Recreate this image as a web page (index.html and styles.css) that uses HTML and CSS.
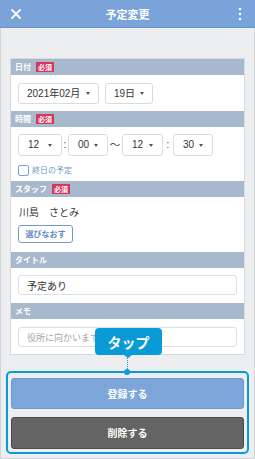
FILE: index.html
```html
<!DOCTYPE html>
<html lang="ja">
<head>
<meta charset="utf-8">
<title>予定変更</title>
<link rel="stylesheet" href="styles.css">
</head>
<body>
<div class="screen">
  <header class="appbar">
    <svg class="icon-close" width="10" height="10" viewBox="0 0 10 10"><path d="M1 1 L9 9 M9 1 L1 9" stroke="#fff" stroke-width="1.8" stroke-linecap="square"/></svg>
    <h1 class="appbar-title">予定変更</h1>
    <svg class="icon-more" width="4" height="14" viewBox="0 0 4 14"><circle cx="2" cy="2" r="1.3" fill="#fff"/><circle cx="2" cy="7" r="1.3" fill="#fff"/><circle cx="2" cy="12" r="1.3" fill="#fff"/></svg>
  </header>
  <main class="content">
    <section class="panel">
      <div class="sec-head">日付<span class="req">必須</span></div>
      <div class="sec-body date-body">
        <div class="select w81"><span>2021年02月</span><i class="caret"></i></div>
        <div class="select w48"><span>19日</span><i class="caret"></i></div>
      </div>

      <div class="sec-head">時間<span class="req">必須</span></div>
      <div class="sec-body time-body">
        <div class="time-row">
          <div class="select t44"><span>12</span><i class="caret"></i></div>
          <span class="sep s6">:</span>
          <div class="select t40"><span>00</span><i class="caret"></i></div>
          <span class="sep s14">〜</span>
          <div class="select t41"><span>12</span><i class="caret"></i></div>
          <span class="sep s10">:</span>
          <div class="select t40"><span>30</span><i class="caret"></i></div>
        </div>
        <label class="check"><span class="box"></span><span class="check-text">終日の予定</span></label>
      </div>

      <div class="sec-head">スタッフ<span class="req">必須</span></div>
      <div class="sec-body staff-body">
        <div class="staff-name">川島　さとみ</div>
        <button class="btn-outline">選びなおす</button>
      </div>

      <div class="sec-head">タイトル</div>
      <div class="sec-body input-body">
        <div class="input">予定あり</div>
      </div>

      <div class="sec-head">メモ</div>
      <div class="sec-body input-body memo-body">
        <div class="input placeholder">役所に向かいます</div>
      </div>
    </section>

    <div class="actions">
      <button class="btn btn-primary">登録する</button>
      <button class="btn btn-dark">削除する</button>
    </div>

    <div class="tap-frame"></div>
    <div class="tap-line"></div>
    <div class="tap-dot"></div>
    <div class="tooltip">タップ</div>
  </main>
</div>
</body>
</html>
```

FILE: styles.css
```css
* { box-sizing: border-box; margin: 0; padding: 0; }
html, body { width: 255px; height: 459px; overflow: hidden; }
body {
  font-family: "Liberation Sans", "Noto Sans CJK JP", sans-serif;
  background: #eceef0;
  color: #333;
}
.screen {
  width: 255px;
  height: 459px;
  border: 1px solid #d2d4d8;
  border-top: none;
  background: #eceef0;
  position: relative;
}
.appbar {
  height: 28px;
  margin: 0 -1px;
  background: #7aa4d9;
  border-bottom: 1px solid #6890c6;
  display: flex;
  align-items: center;
  justify-content: space-between;
  padding: 0 13px 0 11px;
  position: relative;
}
.icon-close { display: block; margin-top: 1px; }
.icon-more { display: block; margin-top: 1px; }
.appbar-title {
  position: absolute;
  left: 0; right: 0;
  text-align: center;
  font-size: 11px;
  font-weight: bold;
  color: #fff;
  line-height: 28px;
  font-family: "Noto Sans CJK JP", sans-serif;
  pointer-events: none;
}
.content {
  padding: 30px 9px 0 9px;
  position: relative;
}
.panel {
  background: #fff;
  border: 1px solid #d6d9de;
}
.sec-head {
  height: 16px;
  background: #a9b9cd;
  color: #fff;
  font-size: 8px;
  font-weight: bold;
  font-family: "Noto Sans CJK JP", sans-serif;
  display: flex;
  align-items: center;
  padding-left: 4px;
  line-height: 1;
}
.req {
  display: inline-block;
  background: #d8345c;
  color: #fff;
  font-size: 7px;
  height: 10px;
  line-height: 10px;
  padding: 0 2px;
  margin-left: 5px;
  white-space: nowrap;
}
.sec-body { padding: 0 7px; }
.date-body {
  display: flex;
  gap: 6px;
  padding-top: 8px;
  padding-bottom: 7px;
}
.select {
  height: 21px;
  border: 1px solid #d9dcdf;
  border-radius: 3px;
  background: #fff;
  display: flex;
  align-items: center;
  justify-content: space-between;
  padding: 0 8px 0 8px;
  font-size: 10px;
  color: #333;
}
.select span { line-height: 1; font-family: "Liberation Sans", "Noto Sans CJK JP", sans-serif; }
.caret {
  width: 0; height: 0;
  border-left: 2.5px solid transparent;
  border-right: 2.5px solid transparent;
  border-top: 3px solid #555;
}
.w81 { width: 81px; }
.w48 { width: 48px; }
.time-body { padding-top: 7px; padding-bottom: 5px; }
.time-row { display: flex; align-items: center; }
.time-row .select { height: 22px; padding: 0 9px; }
.t44 { width: 44px; }
.t40 { width: 40px; }
.t41 { width: 41px; }
.sep { text-align: center; font-size: 10px; color: #444; line-height: 1; }
.s6 { width: 6px; }
.s14 { width: 14px; font-size: 11px; }
.s10 { width: 10px; }
.check {
  display: flex;
  align-items: center;
  margin-top: 8px;
  height: 12px;
}
.box {
  width: 11px; height: 11px;
  border: 1px solid #7ea2d2;
  border-radius: 2px;
  background: #fff;
}
.check-text {
  margin-left: 3px;
  font-size: 8px;
  color: #6f96cb;
  font-family: "Noto Sans CJK JP", sans-serif;
  line-height: 1;
}
.staff-body { padding-top: 7px; padding-bottom: 9px; }
.staff-name {
  font-size: 10px;
  line-height: 16px;
  height: 16px;
  font-family: "Noto Sans CJK JP", sans-serif;
  color: #333;
  padding-left: 1px;
}
.btn-outline {
  display: block;
  margin-top: 5px;
  width: 55px;
  height: 18px;
  border: 1px solid #7399cc;
  border-radius: 3px;
  background: #fff;
  color: #5f89c2;
  font-size: 8px;
  font-weight: bold;
  font-family: "Noto Sans CJK JP", sans-serif;
  line-height: 1;
}
.input-body { padding-top: 7px; padding-bottom: 8px; }
.memo-body { padding-top: 8px; padding-bottom: 7px; }
.input {
  height: 20px;
  border: 1px solid #dcdfe2;
  border-radius: 3px;
  display: flex;
  align-items: center;
  padding-left: 8px;
  font-size: 10px;
  font-family: "Noto Sans CJK JP", sans-serif;
  color: #333;
}
.placeholder { color: #a3a3a3; font-size: 9px; }
.actions {
  margin-top: 23px;
  padding: 0 1px;
  display: flex;
  flex-direction: column;
  gap: 8px;
}
.btn {
  display: block;
  width: 100%;
  border-radius: 3px;
  color: #fff;
  font-size: 10px;
  font-weight: bold;
  font-family: "Noto Sans CJK JP", sans-serif;
  line-height: 1;
}
.btn-primary {
  height: 31px;
  background: #7ca5da;
  border: 1px solid #6f98cf;
}
.btn-dark {
  height: 32px;
  background: #646464;
  border: 1px solid #4a4a4a;
}
.tap-frame {
  position: absolute;
  left: 5px;
  top: 343px;
  width: 243px;
  height: 83px;
  border: 2px solid #0a9bd6;
  border-radius: 5px;
}
.tap-line {
  position: absolute;
  left: 126px;
  top: 328px;
  width: 0;
  height: 15px;
  border-left: 1px dotted #0a9bd6;
}
.tap-dot {
  position: absolute;
  left: 123px;
  top: 341px;
  width: 6px;
  height: 6px;
  border-radius: 50%;
  background: #0a9bd6;
}
.tooltip {
  position: absolute;
  left: 94px;
  top: 300px;
  width: 67px;
  height: 27px;
  background: #0a9bd6;
  border-radius: 4px;
  color: #fff;
  font-size: 14px;
  font-weight: bold;
  font-family: "Noto Sans CJK JP", sans-serif;
  display: flex;
  align-items: center;
  justify-content: center;
  line-height: 1;
}
.tooltip::after {
  content: "";
  position: absolute;
  left: 29px;
  bottom: -3px;
  border-left: 4px solid transparent;
  border-right: 4px solid transparent;
  border-top: 3px solid #0a9bd6;
}
```
